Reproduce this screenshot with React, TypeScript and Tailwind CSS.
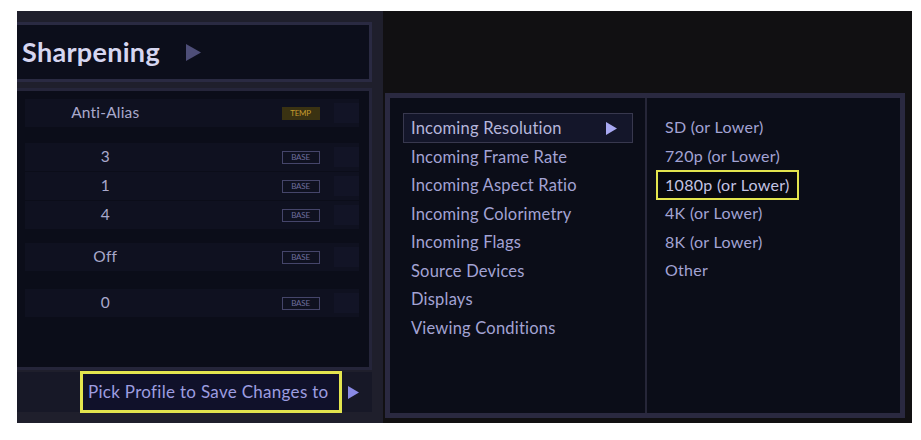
import React from "react";

const font = { fontFamily: "Lato, 'Open Sans', sans-serif" };

const Badge: React.FC<{ temp?: boolean }> = ({ temp }) =>
  temp ? (
    <span className="flex h-[13px] w-[38px] items-center justify-center bg-[#3a3212] text-[8px] leading-none tracking-tight text-[#c49a2e]">
      TEMP
    </span>
  ) : (
    <span className="flex h-[13px] w-[38px] items-center justify-center border border-[#45456a] text-[8px] leading-none tracking-tight text-[#6d6d9c]">
      BASE
    </span>
  );

const Row: React.FC<{ value: string; temp?: boolean }> = ({ value, temp }) => (
  <div className="flex h-[28px] items-center bg-[#0f1120]">
    <div className="w-[164px] text-center text-[15.5px] tracking-[0.2px] text-[#a9a9cc]">{value}</div>
    <div className="ml-[96px]">
      <Badge temp={temp} />
    </div>
    <div className="ml-[14px] h-[20px] w-[26px] bg-[#121426]" />
  </div>
);

const menu = [
  "Incoming Resolution",
  "Incoming Frame Rate",
  "Incoming Aspect Ratio",
  "Incoming Colorimetry",
  "Incoming Flags",
  "Source Devices",
  "Displays",
  "Viewing Conditions",
];

const options = ["SD (or Lower)", "720p (or Lower)", "1080p (or Lower)", "4K (or Lower)", "8K (or Lower)", "Other"];

export default function App() {
  return (
    <div className="h-[440px] w-full bg-white pl-[17px] pt-[11px]" style={font}>
      <div className="flex h-[412px] w-[895px] bg-[#111012]">
        {/* left panel */}
        <div className="flex w-[366px] flex-col bg-[#1f1f2c] pt-[11px]">
          <div className="mr-[11px] flex h-[60px] items-center border-y-[3px] border-r-[3px] border-[#2a2a42] bg-[#0c0e1b] pl-[5px]">
            <span className="text-[27px] font-bold tracking-[0.3px] text-[#d6d6f0]">Sharpening</span>
            <svg width="17" height="17" viewBox="0 0 17 17" className="ml-[25px]">
              <path d="M1 0 L16 8.5 L1 17 Z" fill="#4e4e78" />
            </svg>
          </div>

          <div className="mr-[11px] mt-[6px] flex h-[282px] flex-col border-y-[3px] border-r-[3px] border-[#25253a] bg-[#0b0d19] pl-[8px] pr-[10px] pt-[8px]">
            <Row value="Anti-Alias" temp />
            <div className="mt-[16px]">
              <Row value="3" />
              <div className="h-px" />
              <Row value="1" />
              <div className="h-px" />
              <Row value="4" />
            </div>
            <div className="mt-[14px]">
              <Row value="Off" />
            </div>
            <div className="mt-[18px]">
              <Row value="0" />
            </div>
          </div>

          <div className="mr-[11px] mt-[2px] flex h-[40px] items-center bg-[#171827]">
            <div className="ml-[63px] flex h-[42px] w-[262px] items-center border-[3px] border-[#e3e54e] bg-[#10112a] pl-[5px] text-[17px] tracking-[0.3px] text-[#9d9de0]">
              Pick Profile to Save Changes to
            </div>
            <svg width="11" height="13" viewBox="0 0 11 13" className="ml-[6px]">
              <path d="M0 0 L11 6.5 L0 13 Z" fill="#8a8ae6" />
            </svg>
          </div>
        </div>

        {/* right panel */}
        <div className="flex flex-1 flex-col">
          <div className="h-[82px]" />
          <div className="ml-[2px] mr-[7px] flex h-[325px] bg-[#2a2940] p-[5px]">
            <div className="flex flex-1 bg-[#0b0d18]">
              <div className="flex w-[255px] flex-col pl-[13px] pr-[12px] pt-[15px]">
                {menu.map((m, i) =>
                  i === 0 ? (
                    <div
                      key={m}
                      className="flex h-[30px] items-center justify-between border border-[#38384e] bg-[#14162a] pl-[7px] pr-[15px] text-[16.5px] tracking-[0.2px] text-[#b6b6dc]"
                    >
                      <span>{m}</span>
                      <svg width="11" height="13" viewBox="0 0 11 13">
                        <path d="M0 0 L11 6.5 L0 13 Z" fill="#a9a9f2" />
                      </svg>
                    </div>
                  ) : (
                    <div key={m} className="flex h-[28.5px] items-center pl-[8px] text-[16.5px] tracking-[0.2px] text-[#a3a3d4]">
                      {m}
                    </div>
                  )
                )}
              </div>
              <div className="w-[2px] bg-[#262638]" />
              <div className="flex flex-1 flex-col pl-[9px] pt-[15px]">
                {options.map((o, i) =>
                  i === 2 ? (
                    <div key={o} className="flex h-[29px] items-center">
                      <span className="flex h-[30px] items-center border-2 border-[#e3e54e] bg-[#08090f] px-[7px] text-[16px] tracking-[0.3px] text-[#c4c4e4]">
                        {o}
                      </span>
                    </div>
                  ) : (
                    <div key={o} className="flex h-[28.5px] items-center pl-[9px] text-[16px] tracking-[0.3px] text-[#a3a3d4]">
                      {o}
                    </div>
                  )
                )}
              </div>
            </div>
          </div>
        </div>
      </div>
    </div>
  );
}
